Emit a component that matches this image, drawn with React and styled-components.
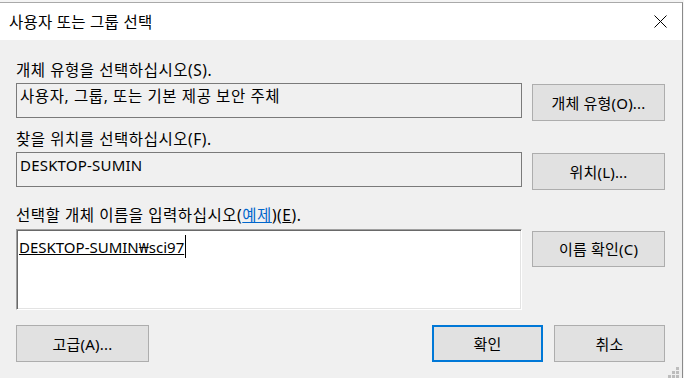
import React from 'react';
import styled, { createGlobalStyle } from 'styled-components';

const GlobalStyle = createGlobalStyle`
  html, body {
    margin: 0;
    padding: 0;
    background: #f4f4f4;
  }

  body {
    font-family: 'Noto Sans', 'Noto Sans CJK KR', sans-serif;
    font-size: 15px;
    color: #000;
  }
`;

const Window = styled('div')`
  width: 682px;
  height: 375px;
  margin-top: 2px;
  border-top: 1px solid #a9a9a9;
  border-right: 1px solid #8a8a8a;
  background: #f0f0f0;
  position: relative;
  display: flex;
  flex-direction: column;
`;

const TitleBar = styled('div')`
  height: 37px;
  background: #fff;
  display: flex;
  align-items: center;
  justify-content: space-between;
  padding: 0 15px 0 9px;

  .title {
    font-size: 15.5px;
    line-height: 20px;
    letter-spacing: 0.25px;
  }
`;

const Body = styled('div')`
  padding: 20px 17px 0 16px;
  display: flex;
  flex-direction: column;
`;

const Section = styled('div')`
  margin-top: ${(p) => p.$top || 0}px;
`;

const Label = styled('div')`
  font-size: 15.5px;
  line-height: 20px;
  margin-bottom: ${(p) => p.$gap || 3}px;
  letter-spacing: 0.55px;

  .link {
    color: #0066cc;
    text-decoration: underline;
  }

  .key {
    text-decoration: underline;
  }
`;

const Row = styled('div')`
  display: grid;
  grid-template-columns: 506px 133px;
  column-gap: 10px;
  align-items: start;
`;

const ReadOnlyBox = styled('div')`
  height: 35px;
  box-sizing: border-box;
  border: 1px solid #7a7a7a;
  background: #f0f0f0;
  padding: 2px 3px;
  font-size: ${(p) => (p.$latin ? 15 : 15.5)}px;
  line-height: 20px;
  letter-spacing: ${(p) => (p.$latin ? 0.2 : 0.6)}px;
`;

const InputBox = styled('div')`
  height: 81px;
  box-sizing: border-box;
  border: 1px solid;
  border-color: #a0a0a0 #fff #fff #a0a0a0;
  box-shadow: inset 1px 1px 0 #696969, inset -1px -1px 0 #e3e3e3;
  background: #fff;
  padding: 5px 2px;
  line-height: 20px;

  .value {
    text-decoration: underline;
  }
`;

const Caret = styled('span')`
  display: inline-block;
  width: 1px;
  height: 23px;
  background: #000;
  margin-left: 1px;
  vertical-align: -5px;
`;

const Button = styled('button')`
  box-sizing: border-box;
  width: ${(p) => p.$width || 133}px;
  height: ${(p) => p.$height || 37}px;
  margin-top: ${(p) => p.$offset || 0}px;
  border: ${(p) => (p.$primary ? '2px solid #0078d7' : '1px solid #adadad')};
  background: #e1e1e1;
  font-family: 'Noto Sans', 'Noto Sans CJK KR', sans-serif;
  font-size: 15px;
  color: #000;
  padding: 0;
  line-height: 20px;
  letter-spacing: 0.2px;
`;

const Footer = styled('div')`
  margin-top: 15px;
  display: flex;
  align-items: center;
  gap: 11px;

  .spacer {
    flex: 1;
  }
`;

const Grip = styled('svg')`
  position: absolute;
  right: 3px;
  bottom: 0;
`;

function CloseIcon() {
  return (
    <svg width="13" height="13" viewBox="0 0 13 13">
      <path d="M0.5 0.5 L12.5 12.5 M12.5 0.5 L0.5 12.5" stroke="#000" strokeWidth="1" fill="none" />
    </svg>
  );
}

export default function App() {
  return (
    <>
      <GlobalStyle />
      <Window>
        <TitleBar>
          <span className="title">사용자 또는 그룹 선택</span>
          <CloseIcon />
        </TitleBar>
        <Body>
          <Section>
            <Label>개체 유형을 선택하십시오(S).</Label>
            <Row>
              <ReadOnlyBox>사용자, 그룹, 또는 기본 제공 보안 주체</ReadOnlyBox>
              <Button $offset={1}>개체 유형(O)...</Button>
            </Row>
          </Section>
          <Section $top={8}>
            <Label>찾을 위치를 선택하십시오(F).</Label>
            <Row>
              <ReadOnlyBox $latin>DESKTOP-SUMIN</ReadOnlyBox>
              <Button $offset={1}>위치(L)...</Button>
            </Row>
          </Section>
          <Section $top={15}>
            <Label $gap={4}>
              선택할 개체 이름을 입력하십시오(<span className="link">예제</span>)(<span className="key">E</span>).
            </Label>
            <Row>
              <InputBox>
                <span className="value">DESKTOP-SUMIN₩sci97</span>
                <Caret />
              </InputBox>
              <Button $offset={2} $height={36}>
                이름 확인(C)
              </Button>
            </Row>
          </Section>
          <Footer>
            <Button>고급(A)...</Button>
            <span className="spacer" />
            <Button $primary $width={111}>
              확인
            </Button>
            <Button $width={111}>취소</Button>
          </Footer>
        </Body>
        <Grip width="12" height="12" viewBox="0 0 12 12">
          <rect x="9" y="1" width="3" height="3" fill="#bdbdbd" />
          <rect x="5" y="5" width="3" height="3" fill="#bdbdbd" />
          <rect x="9" y="5" width="3" height="3" fill="#bdbdbd" />
          <rect x="1" y="9" width="3" height="3" fill="#bdbdbd" />
          <rect x="5" y="9" width="3" height="3" fill="#bdbdbd" />
          <rect x="9" y="9" width="3" height="3" fill="#bdbdbd" />
        </Grip>
      </Window>
    </>
  );
}
